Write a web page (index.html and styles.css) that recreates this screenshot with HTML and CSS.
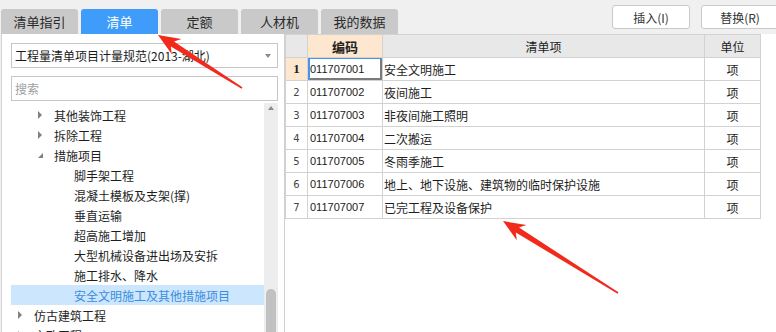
FILE: index.html
```html
<!DOCTYPE html>
<html lang="zh-CN">
<head>
    <meta charset="UTF-8">
    <title>清单库</title>
    <link rel="stylesheet" href="styles.css">
</head>
<body>
    <div class="topbar">
        <div class="tabs">
            <div class="tab">清单指引</div>
            <div class="tab active">清单</div>
            <div class="tab">定额</div>
            <div class="tab">人材机</div>
            <div class="tab">我的数据</div>
        </div>
        <div class="actions">
            <button class="btn">插入(I)</button>
            <button class="btn">替换(R)</button>
        </div>
    </div>

    <div class="workspace">
        <aside class="lib-panel">
            <div class="select">
                <span>工程量清单项目计量规范(2013-湖北)</span>
                <span class="caret"></span>
            </div>
            <div class="search">搜索</div>
            <div class="tree-wrap">
                <ul class="tree">
                    <li class="node lv1"><span class="arrow closed"></span>其他装饰工程</li>
                    <li class="node lv1"><span class="arrow closed"></span>拆除工程</li>
                    <li class="node lv1"><span class="arrow open"></span>措施项目</li>
                    <li class="node lv2"><span class="arrow"></span>脚手架工程</li>
                    <li class="node lv2"><span class="arrow"></span>混凝土模板及支架(撑)</li>
                    <li class="node lv2"><span class="arrow"></span>垂直运输</li>
                    <li class="node lv2"><span class="arrow"></span>超高施工增加</li>
                    <li class="node lv2"><span class="arrow"></span>大型机械设备进出场及安拆</li>
                    <li class="node lv2"><span class="arrow"></span>施工排水、降水</li>
                    <li class="node lv2 current"><span class="arrow"></span>安全文明施工及其他措施项目</li>
                    <li class="node lv0"><span class="arrow closed"></span>仿古建筑工程</li>
                    <li class="node lv0"><span class="arrow closed"></span>市政工程</li>
                </ul>
                <div class="vscroll">
                    <span class="up"></span>
                    <span class="thumb"></span>
                </div>
            </div>
        </aside>

        <section class="grid-pane">
            <table class="grid">
                <colgroup>
                    <col class="c-no">
                    <col class="c-code">
                    <col class="c-name">
                    <col class="c-unit">
                </colgroup>
                <thead>
                    <tr>
                        <th></th>
                        <th class="key">编码</th>
                        <th>清单项</th>
                        <th>单位</th>
                    </tr>
                </thead>
                <tbody>
                    <tr class="selected">
                        <td class="no">1</td>
                        <td class="code focus">011707001</td>
                        <td class="name">安全文明施工</td>
                        <td class="unit">项</td>
                    </tr>
                    <tr>
                        <td class="no">2</td>
                        <td class="code">011707002</td>
                        <td class="name">夜间施工</td>
                        <td class="unit">项</td>
                    </tr>
                    <tr>
                        <td class="no">3</td>
                        <td class="code">011707003</td>
                        <td class="name">非夜间施工照明</td>
                        <td class="unit">项</td>
                    </tr>
                    <tr>
                        <td class="no">4</td>
                        <td class="code">011707004</td>
                        <td class="name">二次搬运</td>
                        <td class="unit">项</td>
                    </tr>
                    <tr>
                        <td class="no">5</td>
                        <td class="code">011707005</td>
                        <td class="name">冬雨季施工</td>
                        <td class="unit">项</td>
                    </tr>
                    <tr>
                        <td class="no">6</td>
                        <td class="code">011707006</td>
                        <td class="name">地上、地下设施、建筑物的临时保护设施</td>
                        <td class="unit">项</td>
                    </tr>
                    <tr>
                        <td class="no">7</td>
                        <td class="code">011707007</td>
                        <td class="name">已完工程及设备保护</td>
                        <td class="unit">项</td>
                    </tr>
                </tbody>
            </table>
        </section>
    </div>

    <!-- red pointer arrows drawn over the screenshot -->
    <svg class="marks" width="776" height="332" viewBox="0 0 776 332">
        <polygon points="158,35 171.8,54.3 170.8,46.6 241.6,88.7 242.4,87.3 174,41.6 181.4,39.1"/>
        <polygon points="503,221 516.8,240.3 515.8,232.5 617.6,293.7 618.4,292.3 519,227.5 526.4,225.1"/>
    </svg>
</body>
</html>
```

FILE: styles.css
```css
body {
    margin: 0;
    padding: 0;
    width: 776px;
    height: 332px;
    overflow: hidden;
    position: relative;
    background-color: #f0f0f0;
    font-family: "Noto Sans CJK SC", "Liberation Sans", sans-serif;
    font-size: 12px;
    color: #1e1e1e;
}

.topbar {
    display: flex;
    height: 34px;
}

.tabs {
    display: flex;
    gap: 3px;
    padding-top: 9px;
    padding-left: 1px;
}

.tab {
    width: 77px;
    height: 25px;
    line-height: 25px;
    text-align: center;
    background-color: #c9c9c9;
    border-radius: 3px 3px 0 0;
    font-size: 13px;
    color: #2a2a2a;
}

.tab.active {
    background-color: #3f9cfb;
    color: #ffffff;
}

.actions {
    display: flex;
    gap: 11px;
    margin-left: auto;
    margin-right: -3px;
    padding-top: 5px;
}

.btn {
    width: 78px;
    height: 24px;
    padding: 0;
    background-color: #ffffff;
    border: 1px solid #c9c9c9;
    border-radius: 3px;
    font-family: "Noto Sans CJK SC", "Liberation Sans", sans-serif;
    font-size: 12px;
    color: #333333;
}

.workspace {
    display: flex;
    height: 298px;
}

.lib-panel {
    width: 273px;
    margin-left: 1px;
    padding: 9px 0 0 9px;
    background-color: #ffffff;
    border-left: 1px solid #d4d4d4;
    overflow: hidden;
}

.select,
.search {
    box-sizing: border-box;
    width: 267px;
    height: 25px;
    border: 1px solid #c6c6c6;
    display: flex;
    align-items: center;
    padding-left: 3px;
    font-size: 12px;
}

.select {
    justify-content: space-between;
    color: #1a1a1a;
}

.caret {
    width: 0;
    height: 0;
    margin-right: 6px;
    border-left: 3px solid transparent;
    border-right: 3px solid transparent;
    border-top: 4px solid #8a8a8a;
}

.search {
    margin-top: 8px;
    color: #a0a0a0;
}

.tree-wrap {
    display: flex;
    width: 267px;
    height: 240px;
    margin-top: 2px;
}

.tree {
    list-style: none;
    margin: 0;
    padding: 2px 0 0 0;
    width: 253px;
}

.node {
    display: flex;
    align-items: center;
    height: 20px;
    white-space: nowrap;
}

.node.lv0 { padding-left: 4px; }
.node.lv1 { padding-left: 24px; }
.node.lv2 { padding-left: 44px; }

.node.current {
    background-color: #cce6fd;
    color: #3b8de0;
}

.arrow {
    position: relative;
    flex: none;
    width: 19px;
    height: 20px;
}

.arrow.closed::before {
    content: "";
    position: absolute;
    left: 3px;
    top: 6px;
    border-top: 4px solid transparent;
    border-bottom: 4px solid transparent;
    border-left: 4px solid #808080;
}

.arrow.open::before {
    content: "";
    position: absolute;
    left: 3px;
    top: 8px;
    border-left: 5px solid transparent;
    border-bottom: 5px solid #808080;
}

.vscroll {
    position: relative;
    width: 14px;
    background-color: #ededed;
}

.vscroll .up {
    position: absolute;
    left: 4px;
    top: 3px;
    border-left: 3px solid transparent;
    border-right: 3px solid transparent;
    border-bottom: 4px solid #8c8c8c;
}

.vscroll .thumb {
    position: absolute;
    left: 2px;
    top: 186px;
    width: 10px;
    height: 70px;
    border-radius: 5px;
    background-color: #c1c1c1;
}

.grid-pane {
    flex: 1;
    background-color: #ffffff;
    border-left: 1px solid #d0d0d0;
}

.grid {
    border-collapse: collapse;
    table-layout: fixed;
    width: 476px;
}

.c-no { width: 22px; }
.c-code { width: 75px; }
.c-name { width: 322px; }
.c-unit { width: 56px; }

.grid th,
.grid td {
    height: 22px;
    padding: 0;
    border: 1px solid #d2d2d2;
    white-space: nowrap;
    overflow: hidden;
}

.grid th {
    background-color: #e8e8e8;
    font-weight: normal;
    font-size: 12px;
    color: #222222;
}

.grid th.key {
    background-color: #fde8cf;
    font-weight: bold;
    font-size: 13px;
}

.grid td.no {
    text-align: center;
    font-family: "DejaVu Sans", sans-serif;
    font-size: 10px;
    color: #444444;
}

.grid tr.selected td.no {
    background-color: #fde8cf;
    font-family: "Liberation Serif", serif;
    font-weight: bold;
    font-size: 13px;
    color: #222222;
}

.grid td.code {
    padding-left: 2px;
    font-family: "Liberation Sans", sans-serif;
    font-size: 11px;
    color: #1a1a1a;
}

.grid td.focus {
    box-shadow: inset 2px 1px 0 #4a94ea, inset -2px -2px 0 #7a7a7a;
}

.grid td.name {
    padding-left: 1px;
    font-size: 12px;
}

.grid td.unit {
    text-align: center;
    font-size: 12px;
}

.marks {
    position: absolute;
    left: 0;
    top: 0;
    pointer-events: none;
}

.marks polygon {
    fill: #f22a1c;
}
```
